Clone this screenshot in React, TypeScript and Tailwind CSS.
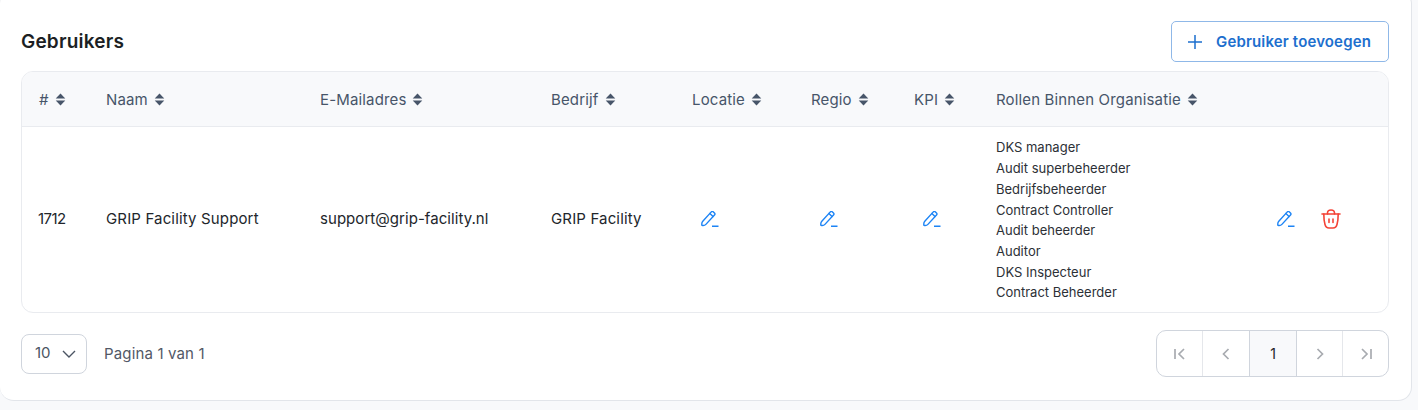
import React from "react";

const font = { fontFamily: '"Inter", "Liberation Sans", sans-serif' };

function Sort() {
  return (
    <svg width="11" height="13" viewBox="0 0 10 12" className="shrink-0" fill="#475569">
      <path d="M5 .5 9.400 5H.6Z" />
      <path d="M5 11.500.6 7h8.800Z" />
    </svg>
  );
}

function Pen() {
  return (
    <svg width="18" height="16" viewBox="0 0 18 16" fill="none" stroke="#1d84f5" strokeWidth="1.4" strokeLinejoin="round" strokeLinecap="round">
      <path d="M10.300.9 1.800 10.200c-.9 1-1.200 2.600-.9 4.200 1.700.4 3.100 0 4-1l8.600-9.300c.6-.7.600-1.500 0-2.100l-1.100-1.100c-.6-.6-1.500-.6-2.100 0Z" />
      <path d="m8.900 2.500 3.100 3" />
      <path d="M11 15.300h6.500" strokeLinecap="butt" />
    </svg>
  );
}

function Trash() {
  return (
    <svg width="20" height="20" viewBox="0 0 20 20" fill="none" stroke="#f44336" strokeWidth="1.6" strokeLinecap="round" strokeLinejoin="round">
      <path d="M1 5h18" />
      <path d="M6.500 5V4c0-1.700 1.500-3 3.500-3s3.500 1.300 3.500 3v1" />
      <path d="M2.800 5c0 4 .5 8 1.200 10.500.5 2 1.700 3.500 4 3.500h4c2.300 0 3.500-1.500 4-3.500.7-2.500 1.200-6.500 1.200-10.500" />
      <path d="M8 10v3.500M12 10v3.500" />
    </svg>
  );
}

function Th({ label, className }: { label: string; className: string }) {
  return (
    <th className={`font-normal text-left p-0 pl-[17px] ${className}`}>
      <span className="inline-flex items-center gap-[6px] text-[15px] tracking-[0.15px] text-[#475569]">
        {label}
        <Sort />
      </span>
    </th>
  );
}

function PageCell({ children, className = "" }: { children: React.ReactNode; className?: string }) {
  return <div className={`flex items-center justify-center ${className}`}>{children}</div>;
}

function Pager({ d }: { d: string }) {
  return (
    <svg width="14" height="14" viewBox="0 0 14 14" fill="none" stroke="#a8abb0" strokeWidth="1.7">
      <path d={d} />
    </svg>
  );
}

export default function App() {
  const roles = [
    "DKS manager",
    "Audit superbeheerder",
    "Bedrijfsbeheerder",
    "Contract Controller",
    "Audit beheerder",
    "Auditor",
    "DKS Inspecteur",
    "Contract Beheerder",
  ];
  return (
    <div style={font} className="h-[410px] w-[1418px] overflow-hidden bg-[#f8f9fb] text-[#1f2328]">
      <div className="-mt-[10px] h-[411px] w-[1412px] rounded-[14px] border border-[#e2e5ea] border-l-0 bg-white pl-[21px] pr-[22px] pt-[30px]">
        <div className="flex h-[41px] items-center justify-between">
          <h1 className="pt-[2px] text-[19px] font-semibold tracking-[0.2px] text-[#1c1f24]">Gebruikers</h1>
          <button className="flex h-[41px] w-[218px] items-center gap-[14px] rounded-[5px] border border-[#8fb8e8] bg-white pl-[16px] text-[15px] font-semibold tracking-[0.15px] text-[#1d6fce]">
            <svg width="14" height="14" viewBox="0 0 14 14" stroke="#1d6fce" strokeWidth="1.5" fill="none">
              <path d="M7 0v14M0 7h14" />
            </svg>
            <span className="pt-[1px]">Gebruiker toevoegen</span>
          </button>
        </div>
        <div className="mt-[9px] overflow-hidden rounded-[12px] border border-[#e9ebef]">
          <table className="w-full table-fixed border-collapse">
            <thead>
              <tr className="h-[54px] border-b border-[#e9ebef] bg-[#f8f9fb]">
                <Th label="#" className="w-[67px]" />
                <Th label="Naam" className="w-[214px]" />
                <Th label="E-Mailadres" className="w-[231px]" />
                <Th label="Bedrijf" className="w-[141px]" />
                <Th label="Locatie" className="w-[119px]" />
                <Th label="Regio" className="w-[103px]" />
                <Th label="KPI" className="w-[82px]" />
                <Th label="Rollen Binnen Organisatie" className="w-[280px]" />
                <th />
              </tr>
            </thead>
            <tbody>
              <tr className="h-[186px] text-[15px] text-[#22262b]">
                <td className="pl-[16px] pb-[1px] tracking-[-0.6px]">1712</td>
                <td className="pl-[17px] pb-[1px] tracking-[0.15px]">GRIP Facility Support</td>
                <td className="pl-[17px] pb-[1px] tracking-[0.05px]">support@grip-facility.nl</td>
                <td className="pl-[17px] pb-[1px] tracking-[0.15px]">GRIP Facility</td>
                <td className="pl-[26px]"><Pen /></td>
                <td className="pl-[26px]"><Pen /></td>
                <td className="pl-[26px]"><Pen /></td>
                <td className="pl-[17px] pt-[2px] text-[13px] leading-[20.7px] text-[#2c3036]">
                  {roles.map((r) => (
                    <div key={r}>{r}</div>
                  ))}
                </td>
                <td>
                  <div className="flex items-center gap-[26px] pl-[18px]">
                    <Pen />
                    <Trash />
                  </div>
                </td>
              </tr>
            </tbody>
          </table>
        </div>
        <div className="mt-[17px] flex items-center justify-between">
          <div className="flex items-center gap-[17px]">
            <div className="flex h-[40px] w-[66px] items-center justify-between rounded-[8px] border border-[#d0d5dd] pl-[13px] pr-[10px] text-[15px] text-[#4b5563]">
              10
              <svg width="14" height="8" viewBox="0 0 14 8" fill="none" stroke="#4b5563" strokeWidth="1.4">
                <path d="m1 1 6 6 6-6" />
              </svg>
            </div>
            <span className="pt-[1px] text-[15px] tracking-[0.15px] text-[#525866]">Pagina 1 van 1</span>
          </div>
          <div className="flex h-[47px] w-[233px] overflow-hidden rounded-[10px] border border-[#d0d5dd] text-[14px] text-[#1f2328]">
            <PageCell className="w-[46px] border-r border-[#e5e7eb]"><Pager d="M2 2v10M11 2 6 7l5 5" /></PageCell>
            <PageCell className="w-[47px] border-r border-[#d0d5dd]"><Pager d="M9.500 2 4.500 7l5 5" /></PageCell>
            <PageCell className="w-[47px] border-r border-[#d0d5dd] bg-[#f8f9fb]">1</PageCell>
            <PageCell className="w-[46px] border-r border-[#e5e7eb]"><Pager d="m4.500 2 5 5-5 5" /></PageCell>
            <PageCell className="flex-1"><Pager d="m3 2 5 5-5 5M12 2v10" /></PageCell>
          </div>
        </div>
      </div>
    </div>
  );
}
